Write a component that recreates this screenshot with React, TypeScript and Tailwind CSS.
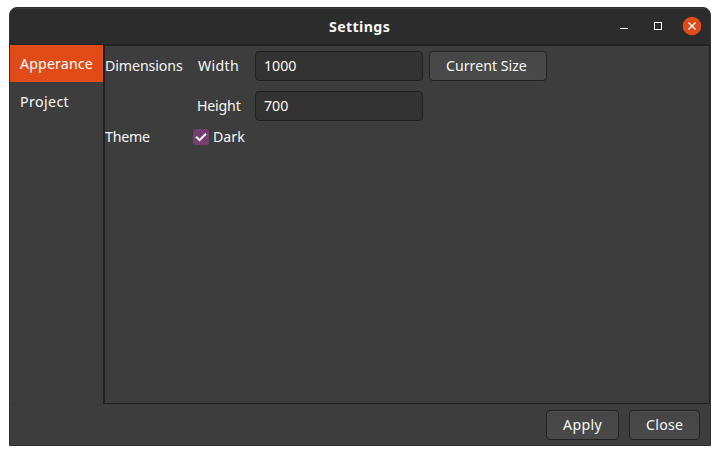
import React from 'react';

const label = 'block whitespace-nowrap';
const button =
  'flex h-[30px] items-center rounded-[4px] border border-[#212121] bg-linear-to-b from-[#464646] to-[#494949] pl-4 shadow-[inset_0_1px_#505050]';
const field =
  'h-[30px] w-[168px] rounded-[4px] border border-[#212121] bg-[#333333] pb-px pl-2 text-[#fcfcfc] outline-none';

function TitleBar() {
  return (
    <header className="flex h-[37px] items-center border-b border-[#232323] bg-[#2c2c2c] shadow-[inset_0_1px_#3a3a3a]">
      <div className="w-[319px]" />
      <h1 className="w-[63px] pt-px text-[14.2px] font-bold tracking-[0.38px] whitespace-nowrap">Settings</h1>
      <svg className="ml-auto" width="100" height="36" viewBox="0 0 100 36" fill="none">
        <path d="M10 20.5H18" stroke="#fff" />
        <rect x="44.5" y="14.5" width="7" height="7" stroke="#fff" />
        <circle cx="82" cy="18" r="9.3" fill="#e04b18" />
        <path d="M78.5 14.5L85.5 21.5M85.5 14.5L78.5 21.5" stroke="#fff" strokeWidth="1.4" />
      </svg>
    </header>
  );
}

export default function App() {
  return (
    <div className="h-[455px] w-[720px] bg-white pt-[7px] pl-[9px] font-['Noto_Sans',sans-serif] text-[14.2px] leading-5 text-[#f7f7f7]">
      <div className="flex h-[439px] w-[702px] flex-col overflow-hidden rounded-t-[8px] border border-[#303030] bg-[#3d3d3d]">
        <TitleBar />
        <main className="flex h-[359px]">
          <nav className="w-[93px]">
            <div className="flex h-[37px] items-center bg-[#e04b18] pl-[10px] text-white">
              <span className={`${label} tracking-[0.15px]`}>Apperance</span>
            </div>
            <div className="flex h-[39px] items-center pl-[10px]">
              <span className={`${label} tracking-[0.4px]`}>Project</span>
            </div>
          </nav>
          <section className="w-[607px] border-t border-r border-b border-l-2 border-[#212121] pt-[5px]">
            <div className="flex h-[30px] items-center">
              <span className={`${label} w-[93px] tracking-[-0.1px]`}>Dimensions</span>
              <span className={`${label} w-[57px] tracking-[0.3px]`}>Width</span>
              <input className={field} defaultValue="1000" />
              <button className={`${button} ml-[6px] w-[118px]`}>
                <span className={label}>Current Size</span>
              </button>
            </div>
            <div className="mt-[10px] flex h-[30px] items-center pl-[92px]">
              <span className={`${label} w-[58px] tracking-[-0.2px]`}>Height</span>
              <input className={field} defaultValue="700" />
            </div>
            <div className="mt-[6px] flex h-5 items-center">
              <span className={`${label} w-[88px] tracking-[-0.2px]`}>Theme</span>
              <span className="mr-1 flex size-4 items-center justify-center rounded-[3px] bg-[#763e70]">
                <svg width="16" height="16" viewBox="0 0 16 16" fill="none">
                  <path d="M3 7.8L6.6 11.2L13 4.7" stroke="#fff" strokeWidth="2" />
                </svg>
              </span>
              <span className={label}>Dark</span>
            </div>
          </section>
        </main>
        <footer className="flex h-[41px] justify-end gap-[10px] border-t border-[#393939] pt-[5px] pr-[10px]">
          <button className={`${button} w-[73px]`}>
            <span className={`${label} tracking-[0.35px]`}>Apply</span>
          </button>
          <button className={`${button} w-[71px]`}>
            <span className={`${label} tracking-[0.25px]`}>Close</span>
          </button>
        </footer>
      </div>
    </div>
  );
}
